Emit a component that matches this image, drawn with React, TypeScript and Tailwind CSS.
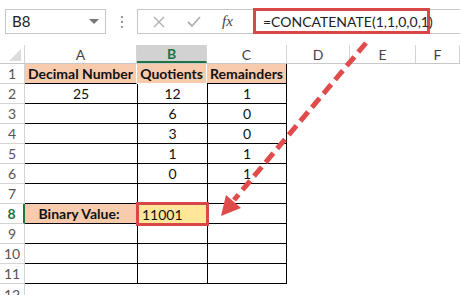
import React from "react";

const cols = [
  { key: "A", w: "w-[112px]" },
  { key: "B", w: "w-[70px]" },
  { key: "C", w: "w-[80px]" },
  { key: "D", w: "w-[63px]" },
  { key: "E", w: "w-[66px]" },
  { key: "F", w: "flex-1" },
];

const rows: [string, string, string][] = [
  ["Decimal Number", "Quotients", "Remainders"],
  ["25", "12", "1"],
  ["", "6", "0"],
  ["", "3", "0"],
  ["", "1", "1"],
  ["", "0", "1"],
  ["", "", ""],
  ["Binary Value:", "11001", ""],
  ["", "", ""],
  ["", "", ""],
  ["", "", ""],
];

const font = { fontFamily: "Lato, 'Open Sans', sans-serif" };

const Toolbar: React.FC = () => (
  <div className="flex items-start h-[45px] pt-[9px] pl-[5px] bg-white">
    <div className="w-[101px] shrink-0 h-[25px] border border-[#c6c6c6] flex items-center justify-between pl-[6px] pr-[6px]">
      <span className="text-[15px] text-[#222]">B8</span>
      <span className="w-0 h-0 border-l-[5px] border-r-[5px] border-t-[5px] border-l-transparent border-r-transparent border-t-[#777]" />
    </div>
    <div className="w-[31px] shrink-0 h-[25px] flex flex-col items-center justify-center gap-[3px]">
      <span className="w-[2px] h-[2px] bg-[#999]" />
      <span className="w-[2px] h-[2px] bg-[#999]" />
      <span className="w-[2px] h-[2px] bg-[#999]" />
    </div>
    <div className="flex-1 h-[25px] border border-[#c6c6c6] border-r-0 flex items-center">
      <div className="w-[115px] shrink-0 flex items-center">
        <svg width="14" height="14" viewBox="0 0 14 14" className="ml-[14px]">
          <path d="M2 2 L12 12 M12 2 L2 12" stroke="#b0b0b0" strokeWidth="1.4" />
        </svg>
        <svg width="16" height="14" viewBox="0 0 16 14" className="ml-[20px]">
          <path d="M2 7 L6 11 L14 2" stroke="#b0b0b0" strokeWidth="1.8" fill="none" />
        </svg>
        <span className="ml-[20px] text-[15px] italic text-[#444]" style={{ fontFamily: "'Liberation Serif', serif" }}>
          fx
        </span>
      </div>
      <div className="w-[177px] shrink-0 h-[26px] -mt-[1px] border-[3px] border-[#d9474b] flex items-center pl-[7px]">
        <span className="text-[14px] text-[#222] whitespace-nowrap">=CONCATENATE(1,1,0,0,1)</span>
      </div>
    </div>
  </div>
);

const HeaderRow: React.FC = () => (
  <div className="flex h-[19px] border-b border-[#c8c8c8]">
    <div className="w-[25px] shrink-0 border-r border-[#d4d4d4] flex items-end justify-end pr-[3px] pb-[2px]">
      <div className="w-0 h-0 border-l-[12px] border-b-[12px] border-l-transparent border-b-[#dcdcdc]" />
    </div>
    {cols.map((c) => (
      <div
        key={c.key}
        className={`${c.w} shrink-0 flex items-center justify-center text-[14px] border-r border-[#d4d4d4] ${
          c.key === "B" ? "bg-[#d2d2d2] text-[#217346] font-bold border-b-2 border-b-[#217346]" : "text-[#444]"
        }`}
      >
        {c.key}
      </div>
    ))}
  </div>
);

const cellBase = "shrink-0 flex items-center text-[14px] text-[#111] h-full whitespace-nowrap";

const DataRow: React.FC<{ n: number; v: [string, string, string] }> = ({ n, v }) => {
  const head = n === 1;
  const bin = n === 8;
  const peach = "bg-[#f8cbad]";
  return (
    <div className="flex h-[20px]">
      <div
        className={`w-[25px] shrink-0 flex items-center justify-center text-[14px] border-r border-b border-[#d4d4d4] ${
          bin ? "text-[#217346] font-bold border-r-2 border-r-[#217346]" : "text-[#555]"
        }`}
      >
        {n}
      </div>
      <div
        className={`w-[112px] ${cellBase} justify-center ${head || bin ? `${peach} font-bold` : ""} ${
          head ? "border-r border-white border-b border-b-black" : "border-b border-black"
        } ${bin ? "pr-[4px]" : ""}`}
      >
        {v[0]}
      </div>
      {bin ? (
        <div className="w-[70px] shrink-0 h-full border-l border-b border-black relative">
          <div className="absolute -left-[2px] -top-[2px] w-[73px] h-[24px] border-[3px] border-[#d9474b] bg-[#ffe699] flex items-center pl-[3px] text-[14px] text-[#111]">
            11001
          </div>
        </div>
      ) : (
        <div
          className={`w-[70px] ${cellBase} justify-center border-b border-black ${
            head ? `${peach} font-bold border-r border-white` : "border-l border-black"
          }`}
        >
          {v[1]}
        </div>
      )}
      <div
        className={`w-[80px] ${cellBase} justify-center border-b border-black ${
          head ? `${peach} font-bold border-r border-r-black` : "border-l border-r border-black"
        }`}
      >
        {v[2]}
      </div>
      <div className="flex-1" />
    </div>
  );
};

const App: React.FC = () => {
  return (
    <div className="relative w-[460px] h-[295px] overflow-hidden bg-white" style={font}>
      <Toolbar />
      <HeaderRow />
      {rows.map((r, i) => (
        <DataRow key={i} n={i + 1} v={r} />
      ))}
      <div className="flex h-[20px]">
        <div className="w-[25px] flex items-center justify-center text-[14px] text-[#555] border-r border-[#d4d4d4]">12</div>
      </div>
      <svg className="absolute left-0 top-0 pointer-events-none" width="460" height="295">
        <line x1="366" y1="43" x2="234" y2="200" stroke="#e04b4b" strokeWidth="5" strokeDasharray="12 6" />
        <polygon points="221,216 241,208 226,195" fill="#e04b4b" />
      </svg>
    </div>
  );
};

export default App;
